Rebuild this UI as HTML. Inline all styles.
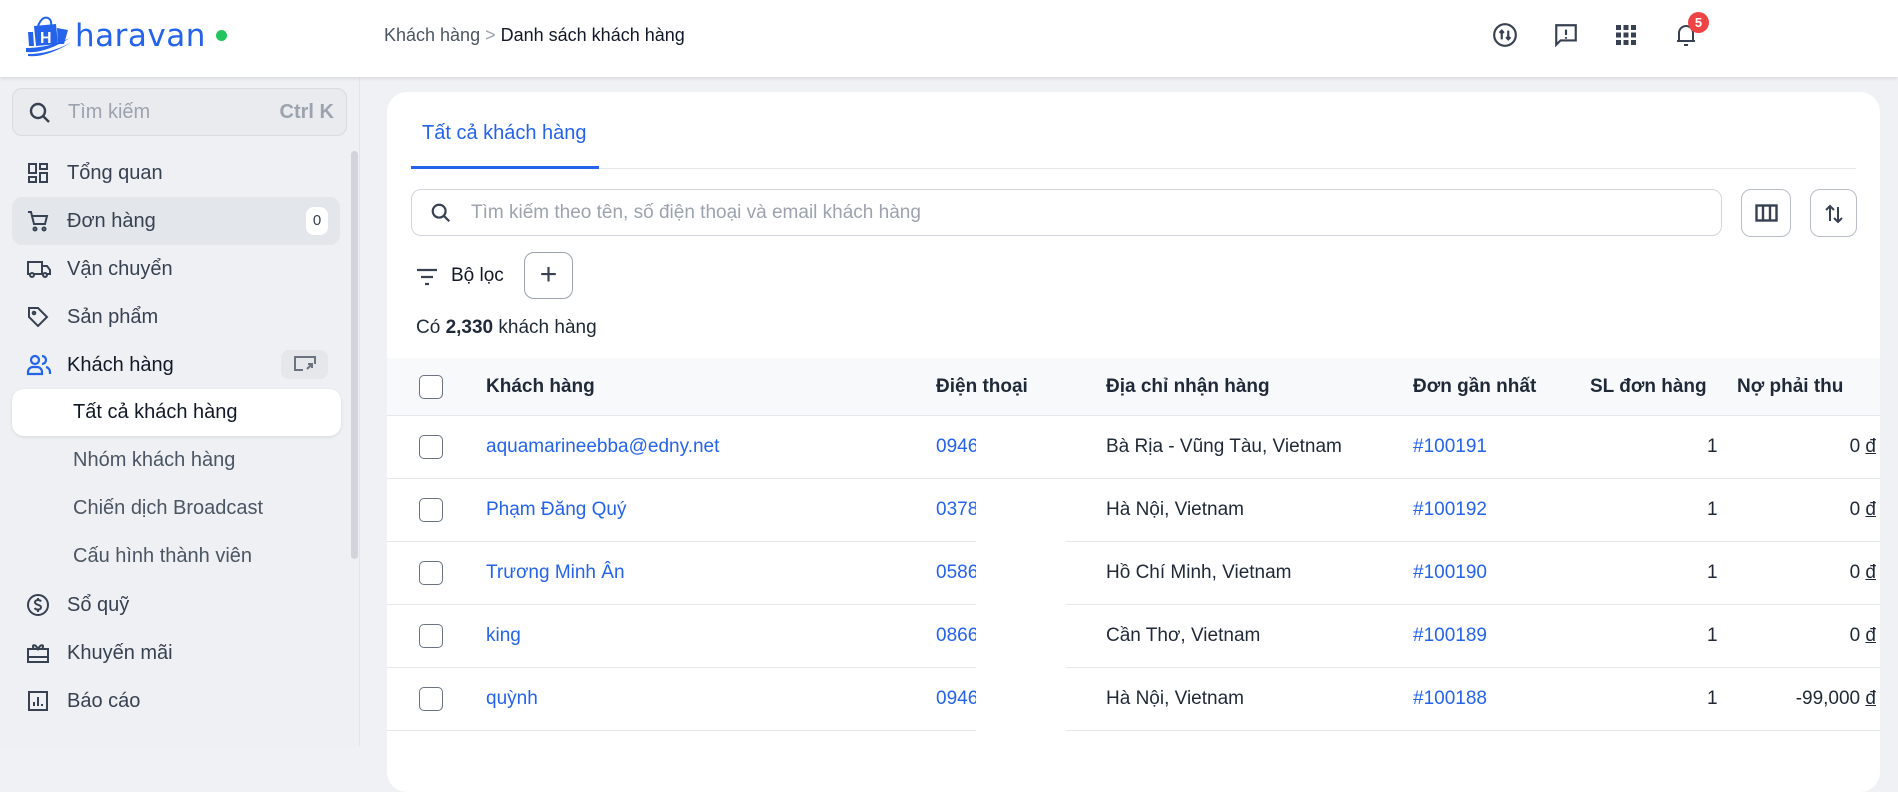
<!DOCTYPE html>
<html><head><meta charset="utf-8"><style>
*{box-sizing:border-box;margin:0;padding:0}
body{width:1898px;height:747px;overflow:hidden;background:#f0f1f4;font-family:"Liberation Sans","Noto Sans CJK SC",sans-serif;color:#1f2937;position:relative}
.abs{position:absolute}
.hdr{left:0;top:0;width:1898px;height:77px;background:#fff;box-shadow:0 1px 4px rgba(0,0,0,.12);z-index:5}
.side{left:0;top:77px;width:360px;height:670px;background:#eef0f3;border-right:1px solid #e3e5e9}
.mi{position:absolute;left:12px;width:328px;height:48px;display:flex;align-items:center;font-size:20px;color:#374151}
.mi svg{position:absolute;left:14px}
.mi span{position:absolute;left:55px}
.sub{position:absolute;left:12px;width:329px;height:47px;display:flex;align-items:center;font-size:20px;color:#4b5563}
.sub span{position:absolute;left:61px}
.card{left:387px;top:92px;width:1493px;height:700px;background:#fff;border-radius:20px;overflow:hidden}
.th{position:absolute;font-size:19px;font-weight:bold;color:#1f2937}
.cb{position:absolute;left:32px;width:24px;height:24px;border:1.5px solid #6b7280;border-radius:5px;background:#fff}
.row{position:absolute;left:0;width:1493px;height:63px;border-bottom:1px solid #e5e7eb;font-size:19px}
.row div{position:absolute;top:20px;white-space:nowrap}
.row div.cb{top:19px}
.row div.amt{right:4px;text-align:right}
.bl{color:#2563eb}
</style></head><body>
<div class="abs hdr">
  <svg class="abs" style="left:24px;top:14px" width="50" height="44" viewBox="0 0 50 44">
    <path d="M14 12 Q18 2 24 4 Q28 6 27 12" fill="none" stroke="#2563eb" stroke-width="2"/>
    <path d="M10 12 L32 10 L34 30 L12 32 Z" fill="#2563eb"/>
    <path d="M33 14 L44 16 L40 30 L34 30 Z" fill="#2563eb"/>
    <path d="M4 18 L9 18 L10 32 L5 32 Z" fill="#2563eb"/>
    <text x="16" y="29" font-size="16" font-weight="bold" fill="#fff" font-family="Liberation Sans">H</text>
    <path d="M2 38 Q20 40 46 24 Q24 34 2 34 Z" fill="#2563eb"/>
    <path d="M4 42 Q22 44 48 28 Q26 40 4 40 Z" fill="#2563eb"/>
  </svg>
  <div class="abs" style="left:75px;top:18px;font-size:31px;color:#2563eb;letter-spacing:0.5px;font-family:'DejaVu Sans',sans-serif">haravan</div>
  <div class="abs" style="left:216px;top:30px;width:11px;height:11px;border-radius:50%;background:#22c55e"></div>
  <div class="abs" style="left:384px;top:25px;font-size:18px;color:#4b5563">Khách hàng <span style="color:#9ca3af">&gt;</span> <span style="color:#111827">Danh sách khách hàng</span></div>
  <svg class="abs" style="left:1492px;top:22px" width="26" height="26" viewBox="0 0 24 24" fill="none" stroke="#374151" stroke-width="2"><circle cx="12" cy="12" r="10"/><path d="M9 16V8M7 10l2-2 2 2M15 8v8M13 14l2 2 2-2"/></svg>
  <svg class="abs" style="left:1553px;top:22px" width="26" height="26" viewBox="0 0 24 24" fill="none" stroke="#374151" stroke-width="2"><path d="M3 3h18v14H7l-4 4z"/><path d="M12 7v5M12 14v1.5"/></svg>
  <svg class="abs" style="left:1616px;top:25px" width="20" height="20" viewBox="0 0 20 20" fill="#374151"><rect x="0" y="0" width="5" height="5"/><rect x="7.5" y="0" width="5" height="5"/><rect x="15" y="0" width="5" height="5"/><rect x="0" y="7.5" width="5" height="5"/><rect x="7.5" y="7.5" width="5" height="5"/><rect x="15" y="7.5" width="5" height="5"/><rect x="0" y="15" width="5" height="5"/><rect x="7.5" y="15" width="5" height="5"/><rect x="15" y="15" width="5" height="5"/></svg>
  <svg class="abs" style="left:1674px;top:22px" width="24" height="26" viewBox="0 0 24 26" fill="none" stroke="#374151" stroke-width="2"><path d="M5 19V11a7 7 0 0 1 14 0v8M3 19h18M10 23h4"/></svg>
  <div class="abs" style="left:1688px;top:12px;width:21px;height:21px;border-radius:50%;background:#ef4444;color:#fff;font-size:13px;font-weight:bold;text-align:center;line-height:21px">5</div>
</div>

<div class="abs side">
  <div class="abs" style="left:12px;top:11px;width:335px;height:48px;border:1px solid #d8dbe0;border-radius:10px;background:#e9ebee">
    <svg class="abs" style="left:15px;top:12px" width="24" height="24" viewBox="0 0 24 24" fill="none" stroke="#374151" stroke-width="2.4"><circle cx="10" cy="10" r="7"/><path d="M15 15l6 6"/></svg>
    <span class="abs" style="left:55px;top:12px;font-size:20px;color:#9ca3af">Tìm kiếm</span>
    <span class="abs" style="right:12px;top:12px;font-size:20px;font-weight:bold;color:#9ca3af">Ctrl K</span>
  </div>
  <div class="abs" style="left:351px;top:74px;width:7px;height:408px;border-radius:4px;background:#d1d5db"></div>
  <div class="mi" style="top:72px"><svg width="24" height="24" viewBox="0 0 24 24" fill="none" stroke="#374151" stroke-width="2"><rect x="3" y="3" width="7" height="9"/><rect x="14" y="3" width="7" height="5"/><rect x="14" y="12" width="7" height="9"/><rect x="3" y="16" width="7" height="5"/></svg><span>Tổng quan</span></div>
  <div class="mi" style="top:120px;background:#e3e6ea;border-radius:10px"><svg width="24" height="24" viewBox="0 0 24 24" fill="none" stroke="#374151" stroke-width="2"><path d="M2 3h3l3 12h11l2-8H6"/><circle cx="9" cy="20" r="1.5"/><circle cx="18" cy="20" r="1.5"/></svg><span>Đơn hàng</span><div class="abs" style="left:294px;top:10px;width:22px;height:28px;border-radius:8px;background:#fff;font-size:15px;text-align:center;line-height:28px">0</div></div>
  <div class="mi" style="top:168px"><svg width="26" height="24" viewBox="0 0 26 24" fill="none" stroke="#374151" stroke-width="2"><path d="M2 5h14v12H2zM16 9h5l3 4v4h-8"/><circle cx="6" cy="18" r="2" fill="#eef0f3"/><circle cx="19" cy="18" r="2" fill="#eef0f3"/></svg><span>Vận chuyển</span></div>
  <div class="mi" style="top:216px"><svg width="24" height="24" viewBox="0 0 24 24" fill="none" stroke="#374151" stroke-width="2"><path d="M3 3h9l9 9-9 9-9-9z"/><circle cx="8" cy="8" r="1.3"/></svg><span>Sản phẩm</span></div>
  <div class="mi" style="top:264px;color:#111827"><svg width="26" height="24" viewBox="0 0 26 24" fill="none" stroke="#2563eb" stroke-width="2.2"><circle cx="9" cy="7" r="4"/><path d="M2 21v-2a5 5 0 0 1 5-5h4a5 5 0 0 1 5 5v2zM16 3a4 4 0 0 1 0 8M20 14a5 5 0 0 1 4 5v2"/></svg><span>Khách hàng</span><div class="abs" style="left:269px;top:9px;width:47px;height:29px;border-radius:8px;background:#e5e7eb"><svg class="abs" style="left:12px;top:5px" width="24" height="18" viewBox="0 0 24 18" fill="none" stroke="#6b7280" stroke-width="2"><path d="M10 15H2V2h20v7M14 14l5-5M15 9h4v4"/></svg></div></div>
  <div class="sub" style="top:312px;background:#fff;border-radius:12px;box-shadow:0 1px 3px rgba(0,0,0,.1);color:#111827"><span>Tất cả khách hàng</span></div>
  <div class="sub" style="top:360px"><span>Nhóm khách hàng</span></div>
  <div class="sub" style="top:408px"><span>Chiến dịch Broadcast</span></div>
  <div class="sub" style="top:456px"><span>Cấu hình thành viên</span></div>
  <div class="mi" style="top:504px"><svg width="24" height="24" viewBox="0 0 24 24" fill="none" stroke="#374151" stroke-width="2"><circle cx="12" cy="12" r="10"/><path d="M15 8.5c-.5-1-1.6-1.5-3-1.5-1.8 0-3 .9-3 2.3 0 3.2 6 1.8 6 5 0 1.4-1.3 2.3-3 2.3-1.5 0-2.7-.6-3.2-1.7M12 5v2M12 17v2"/></svg><span>Sổ quỹ</span></div>
  <div class="mi" style="top:552px"><svg width="24" height="24" viewBox="0 0 24 24" fill="none" stroke="#374151" stroke-width="2"><rect x="2" y="8" width="20" height="13"/><path d="M2 16h20M8 8c-3-4 1-6 4 0 3-6 7-4 4 0"/></svg><span>Khuyến mãi</span></div>
  <div class="mi" style="top:600px"><svg width="24" height="24" viewBox="0 0 24 24" fill="none" stroke="#374151" stroke-width="2"><rect x="3" y="3" width="18" height="18"/><path d="M8 17v-4M12 17V8M16 17v-2"/></svg><span>Báo cáo</span></div>
</div>

<div class="abs card">
  <div class="abs" style="left:35px;top:30px;font-size:20px;color:#2563eb">Tất cả khách hàng</div>
  <div class="abs" style="left:24px;top:76px;width:1445px;height:1px;background:#e5e7eb"></div>
  <div class="abs" style="left:24px;top:74px;width:188px;height:3px;background:#2563eb"></div>
  <div class="abs" style="left:24px;top:97px;width:1311px;height:47px;border:1px solid #d1d5db;border-radius:10px">
    <svg class="abs" style="left:18px;top:12px" width="22" height="22" viewBox="0 0 24 24" fill="none" stroke="#374151" stroke-width="2.4"><circle cx="10" cy="10" r="7"/><path d="M15 15l6 6"/></svg>
    <span class="abs" style="left:59px;top:12px;font-size:19px;color:#9ca3af">Tìm kiếm theo tên, số điện thoại và email khách hàng</span>
  </div>
  <div class="abs" style="left:1354px;top:97px;width:50px;height:48px;border:1px solid #b8bdc6;border-radius:10px"><svg class="abs" style="left:13px;top:14px" width="23" height="18" viewBox="0 0 23 18" fill="none" stroke="#374151" stroke-width="2.4"><rect x="1.5" y="1.5" width="20" height="15"/><path d="M8 2v14M15 2v14"/></svg></div>
  <div class="abs" style="left:1423px;top:97px;width:47px;height:48px;border:1px solid #b8bdc6;border-radius:10px"><svg class="abs" style="left:12px;top:12px" width="22" height="24" viewBox="0 0 22 24" fill="none" stroke="#374151" stroke-width="2"><path d="M7 19V4M3 8l4-4 4 4M15 5v15M11 16l4 4 4-4"/></svg></div>
  <svg class="abs" style="left:29px;top:176px" width="22" height="18" viewBox="0 0 22 18" fill="none" stroke="#374151" stroke-width="2.2"><path d="M1 2h20M5 9h12M9 16h4"/></svg>
  <div class="abs" style="left:64px;top:173px;font-size:19px;color:#111827">Bộ lọc</div>
  <div class="abs" style="left:137px;top:160px;width:49px;height:47px;border:1px solid #9ca3af;border-radius:10px;text-align:center;font-size:30px;line-height:44px;color:#374151">+</div>
  <div class="abs" style="left:29px;top:225px;font-size:19px;color:#1f2937">Có <b>2,330</b> khách hàng</div>

  <div class="abs" style="left:0;top:266px;width:1493px;height:58px;background:#f8f9fb;border-bottom:1px solid #e5e7eb">
    <div class="cb" style="top:17px"></div>
    <div class="th" style="left:99px;top:18px">Khách hàng</div>
    <div class="th" style="left:549px;top:18px">Điện thoại</div>
    <div class="th" style="left:719px;top:18px">Địa chỉ nhận hàng</div>
    <div class="th" style="left:1026px;top:18px">Đơn gần nhất</div>
    <div class="th" style="left:1203px;top:18px">SL đơn hàng</div>
    <div class="th" style="left:1350px;top:18px">Nợ phải thu</div>
  </div>

  <div class="row" style="top:324px"><div class="cb"></div><div class="bl" style="left:99px">aquamarineebba@edny.net</div><div class="bl" style="left:549px;width:40px;overflow:hidden">0946</div><div style="left:719px">Bà Rịa - Vũng Tàu, Vietnam</div><div class="bl" style="left:1026px">#100191</div><div style="left:1320px">1</div><div class="amt">0 <u>đ</u></div></div>
  <div class="row" style="top:387px"><div class="cb"></div><div class="bl" style="left:99px">Phạm Đăng Quý</div><div class="bl" style="left:549px;width:40px;overflow:hidden">0378</div><div style="left:719px">Hà Nội, Vietnam</div><div class="bl" style="left:1026px">#100192</div><div style="left:1320px">1</div><div class="amt">0 <u>đ</u></div></div>
  <div class="row" style="top:450px"><div class="cb"></div><div class="bl" style="left:99px">Trương Minh Ân</div><div class="bl" style="left:549px;width:40px;overflow:hidden">0586</div><div style="left:719px">Hồ Chí Minh, Vietnam</div><div class="bl" style="left:1026px">#100190</div><div style="left:1320px">1</div><div class="amt">0 <u>đ</u></div></div>
  <div class="row" style="top:513px"><div class="cb"></div><div class="bl" style="left:99px">king</div><div class="bl" style="left:549px;width:40px;overflow:hidden">0866</div><div style="left:719px">Cần Thơ, Vietnam</div><div class="bl" style="left:1026px">#100189</div><div style="left:1320px">1</div><div class="amt">0 <u>đ</u></div></div>
  <div class="row" style="top:576px"><div class="cb"></div><div class="bl" style="left:99px">quỳnh</div><div class="bl" style="left:549px;width:40px;overflow:hidden">0946</div><div style="left:719px">Hà Nội, Vietnam</div><div class="bl" style="left:1026px">#100188</div><div style="left:1320px">1</div><div class="amt">-99,000 <u>đ</u></div></div>
  <div class="abs" style="left:589px;top:387px;width:90px;height:320px;background:#fff"></div>
</div>
</body></html>
